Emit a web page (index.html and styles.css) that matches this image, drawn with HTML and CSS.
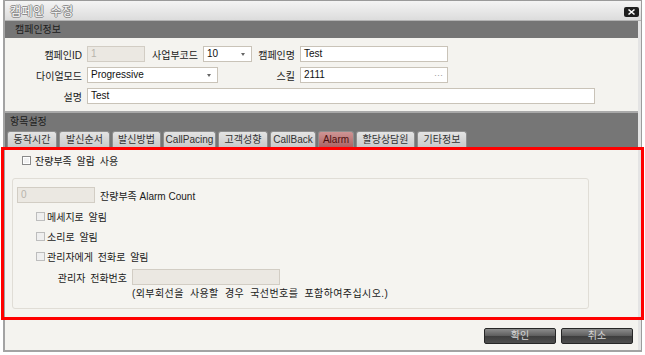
FILE: index.html
```html
<!DOCTYPE html>
<html lang="ko">
<head>
    <meta charset="UTF-8">
    <title>캠페인 수정</title>
    <link rel="stylesheet" href="styles.css">
</head>
<body>
    <div class="window">
        <div class="titlebar">
            <span class="title">캠페인 수정</span>
            <span class="close">
                <svg width="15" height="10" viewBox="0 0 15 10">
                    <path d="M4.5 2.5 L10.5 7.5 M10.5 2.5 L4.5 7.5" stroke="#fff" stroke-width="1.6" fill="none"/>
                </svg>
            </span>
        </div>

        <div class="section-head">캠페인정보</div>

        <div class="info">
            <div class="row">
                <span class="lbl w77">캠페인ID</span>
                <div class="field disabled w58">1</div>
                <span class="lbl w48">사업부코드</span>
                <div class="field select w49">10</div>
                <span class="lbl w38">캠페인명</span>
                <div class="field w148">Test</div>
            </div>
            <div class="row">
                <span class="lbl w77">다이얼모드</span>
                <div class="field select w131">Progressive</div>
                <span class="lbl w72">스킬</span>
                <div class="field dots w148">2111</div>
            </div>
            <div class="row">
                <span class="lbl w77">설명</span>
                <div class="field w508">Test</div>
            </div>
        </div>

        <div class="items">
            <div class="items-title">항목설정</div>
            <div class="tabs">
                <span class="tab w50">동작시간</span>
                <span class="tab w51">발신순서</span>
                <span class="tab w49">발신방법</span>
                <span class="tab w53">CallPacing</span>
                <span class="tab w50">고객성향</span>
                <span class="tab w46">CallBack</span>
                <span class="tab active w36">Alarm</span>
                <span class="tab w59">할당상담원</span>
                <span class="tab w50">기타정보</span>
            </div>
        </div>

        <div class="panel">
            <div class="check-row top-check">
                <span class="checkbox dark"></span>
                <span>잔량부족 알람 사용</span>
            </div>

            <div class="group">
                <div class="count-row">
                    <div class="field disabled w78">0</div>
                    <span>잔량부족 Alarm Count</span>
                </div>
                <div class="check-row sub">
                    <span class="checkbox"></span>
                    <span>메세지로 알림</span>
                </div>
                <div class="check-row sub">
                    <span class="checkbox"></span>
                    <span>소리로 알림</span>
                </div>
                <div class="check-row sub">
                    <span class="checkbox"></span>
                    <span>관리자에게 전화로 알림</span>
                </div>
                <div class="phone-row">
                    <span class="lbl w110">관리자 전화번호</span>
                    <div class="field disabled w148"></div>
                </div>
                <div class="note">(외부회선을 사용할 경우 국선번호를 포함하여주십시오.)</div>
            </div>
        </div>

        <div class="footer">
            <button class="btn">확인</button>
            <button class="btn">취소</button>
        </div>
    </div>

    <div class="highlight"></div>
</body>
</html>
```

FILE: styles.css
```css
html, body {
    margin: 0;
    padding: 0;
    background: #fff;
    overflow: hidden;
}
body {
    font-family: "Liberation Sans", "Noto Sans CJK KR", sans-serif;
    font-size: 10px;
    color: #1a1a1a;
    position: relative;
    width: 645px;
    height: 355px;
}
.window {
    margin-left: 3px;
    width: 639px;
    height: 352px;
    box-sizing: border-box;
    border-left: 2px solid #a3a3a3;
    border-right: 1px solid #9c9c9c;
    border-bottom: 2px solid #a3a3a3;
    padding-right: 3px;
    background: #e4e4e4;
    display: flex;
    flex-direction: column;
}

/* title bar */
.titlebar {
    height: 21px;
    box-sizing: border-box;
    border-top: 1px solid #9a9a9a;
    border-bottom: 1px solid #b4b4b4;
    margin-right: -3px;
    background: linear-gradient(#f4f4f4, #dcdcdc);
    display: flex;
    align-items: center;
    justify-content: space-between;
    padding: 0 2px 0 5px;
}
.title {
    font-size: 12px;
    color: #fafafa;
    letter-spacing: 0.5px;
    word-spacing: 2px;
    text-shadow: 1px 0 0 #8a8a8a, -1px 0 0 #8a8a8a, 0 1px 0 #8a8a8a, 0 -1px 0 #8a8a8a;
}
.close {
    width: 15px;
    height: 10px;
    background: #1e1e1e;
    border-radius: 2px;
    display: flex;
    margin-top: 3px;
}

/* section headers */
.section-head {
    height: 17px;
    line-height: 17px;
    background: #757575;
    color: #1c1c1c;
    padding-left: 10px;
}

.info {
    height: 73px;
    box-sizing: border-box;
    background: #f4f3ef;
    padding-top: 8px;
    display: flex;
    flex-direction: column;
    gap: 5px;
}
.row {
    display: flex;
    gap: 5px;
    height: 16px;
    align-items: center;
}
.lbl {
    text-align: right;
    white-space: nowrap;
    flex-shrink: 0;
}
.field {
    height: 16px;
    box-sizing: border-box;
    border: 1px solid #c9c3b8;
    background: #fff;
    padding: 0 3px;
    line-height: 14px;
    position: relative;
    flex-shrink: 0;
    color: #111;
}
.field.disabled {
    background: #ebe8e2;
    border-color: #d2cdc4;
    color: #b8b4ac;
}
.field.select::after {
    content: "";
    position: absolute;
    right: 6px;
    top: 6px;
    border-left: 2px solid transparent;
    border-right: 2px solid transparent;
    border-top: 3px solid #666;
}
.field.dots::after {
    content: "···";
    position: absolute;
    right: 4px;
    top: 0;
    color: #999;
    font-size: 9px;
}

.w38 { width: 38px; }
.w48 { width: 48px; }
.w49 { width: 49px; }
.w58 { width: 58px; }
.w72 { width: 72px; }
.w77 { width: 77px; }
.w78 { width: 78px; }
.w110 { width: 110px; }
.w131 { width: 131px; }
.w148 { width: 148px; }
.w508 { width: 508px; }

/* tabs */
.items {
    height: 37px;
    box-sizing: border-box;
    background: #767676;
    border-top: 2px solid #a9a9a9;
}
.items-title {
    height: 18px;
    line-height: 18px;
    padding-left: 5px;
    color: #1c1c1c;
}
.tabs {
    display: flex;
    gap: 2px;
    padding-left: 2px;
    height: 17px;
}
.tab {
    height: 17px;
    box-sizing: border-box;
    line-height: 16px;
    text-align: center;
    border: 1px solid #8e8e8e;
    border-bottom: none;
    border-radius: 3px 3px 0 0;
    background: linear-gradient(#e4e4e4, #c8c8c8);
    color: #333;
    white-space: nowrap;
}
.tab.active {
    background: linear-gradient(#cf9494, #a96262);
    color: #4d1010;
}
.tab.w50 { width: 50px; }
.tab.w51 { width: 51px; }
.tab.w49 { width: 49px; }
.tab.w53 { width: 53px; }
.tab.w46 { width: 46px; }
.tab.w36 { width: 36px; }
.tab.w59 { width: 59px; }

/* alarm panel */
.panel {
    height: 172px;
    box-sizing: border-box;
    background: #f5f4f0;
    padding-top: 6px;
    word-spacing: 2px;
}
.check-row {
    display: flex;
    align-items: center;
    gap: 4px;
    height: 12px;
}
.top-check {
    padding-left: 17px;
}
.checkbox {
    width: 9px;
    height: 9px;
    box-sizing: border-box;
    border: 1px solid #bdbdbd;
    background: #efefef;
    flex-shrink: 0;
}
.checkbox.dark {
    border-color: #8a8a8a;
    background: #f2f2f2;
    box-shadow: inset 0 0 0 1px #fff;
}
.group {
    margin: 12px 0 0 7px;
    width: 577px;
    height: 131px;
    box-sizing: border-box;
    border: 1px solid #e0ddd6;
    border-radius: 3px;
    padding: 8px 0 0 4px;
    display: flex;
    flex-direction: column;
}
.count-row {
    display: flex;
    align-items: center;
    gap: 5px;
    height: 16px;
    word-spacing: 0;
}
.check-row.sub {
    height: 20px;
    padding-left: 19px;
    gap: 2px;
}
.count-row + .check-row.sub {
    margin-top: 3px;
}
.phone-row {
    display: flex;
    align-items: center;
    gap: 5px;
    height: 16px;
    margin-top: 3px;
}
.note {
    height: 18px;
    line-height: 18px;
    padding-left: 115px;
    letter-spacing: 0.4px;
    word-spacing: 3px;
    white-space: nowrap;
}

/* footer */
.footer {
    height: 30px;
    box-sizing: border-box;
    background: #f4f3ef;
    display: flex;
    justify-content: flex-end;
    gap: 5px;
    padding: 8px 5px 0 0;
}
.btn {
    width: 72px;
    height: 16px;
    box-sizing: border-box;
    padding: 0;
    border: 1px solid #262626;
    border-radius: 2px;
    background: linear-gradient(#8c8c8c, #5e5e5e 48%, #3e3e3e 52%, #4e4e4e);
    color: #d8d8d8;
    font-family: "Liberation Sans", "Noto Sans CJK KR", sans-serif;
    font-size: 10px;
    line-height: 14px;
}

/* red annotation frame over the panel */
.highlight {
    position: absolute;
    left: 1px;
    top: 147px;
    width: 643px;
    height: 173px;
    box-sizing: border-box;
    border: 3px solid #ff0000;
    pointer-events: none;
}
```
